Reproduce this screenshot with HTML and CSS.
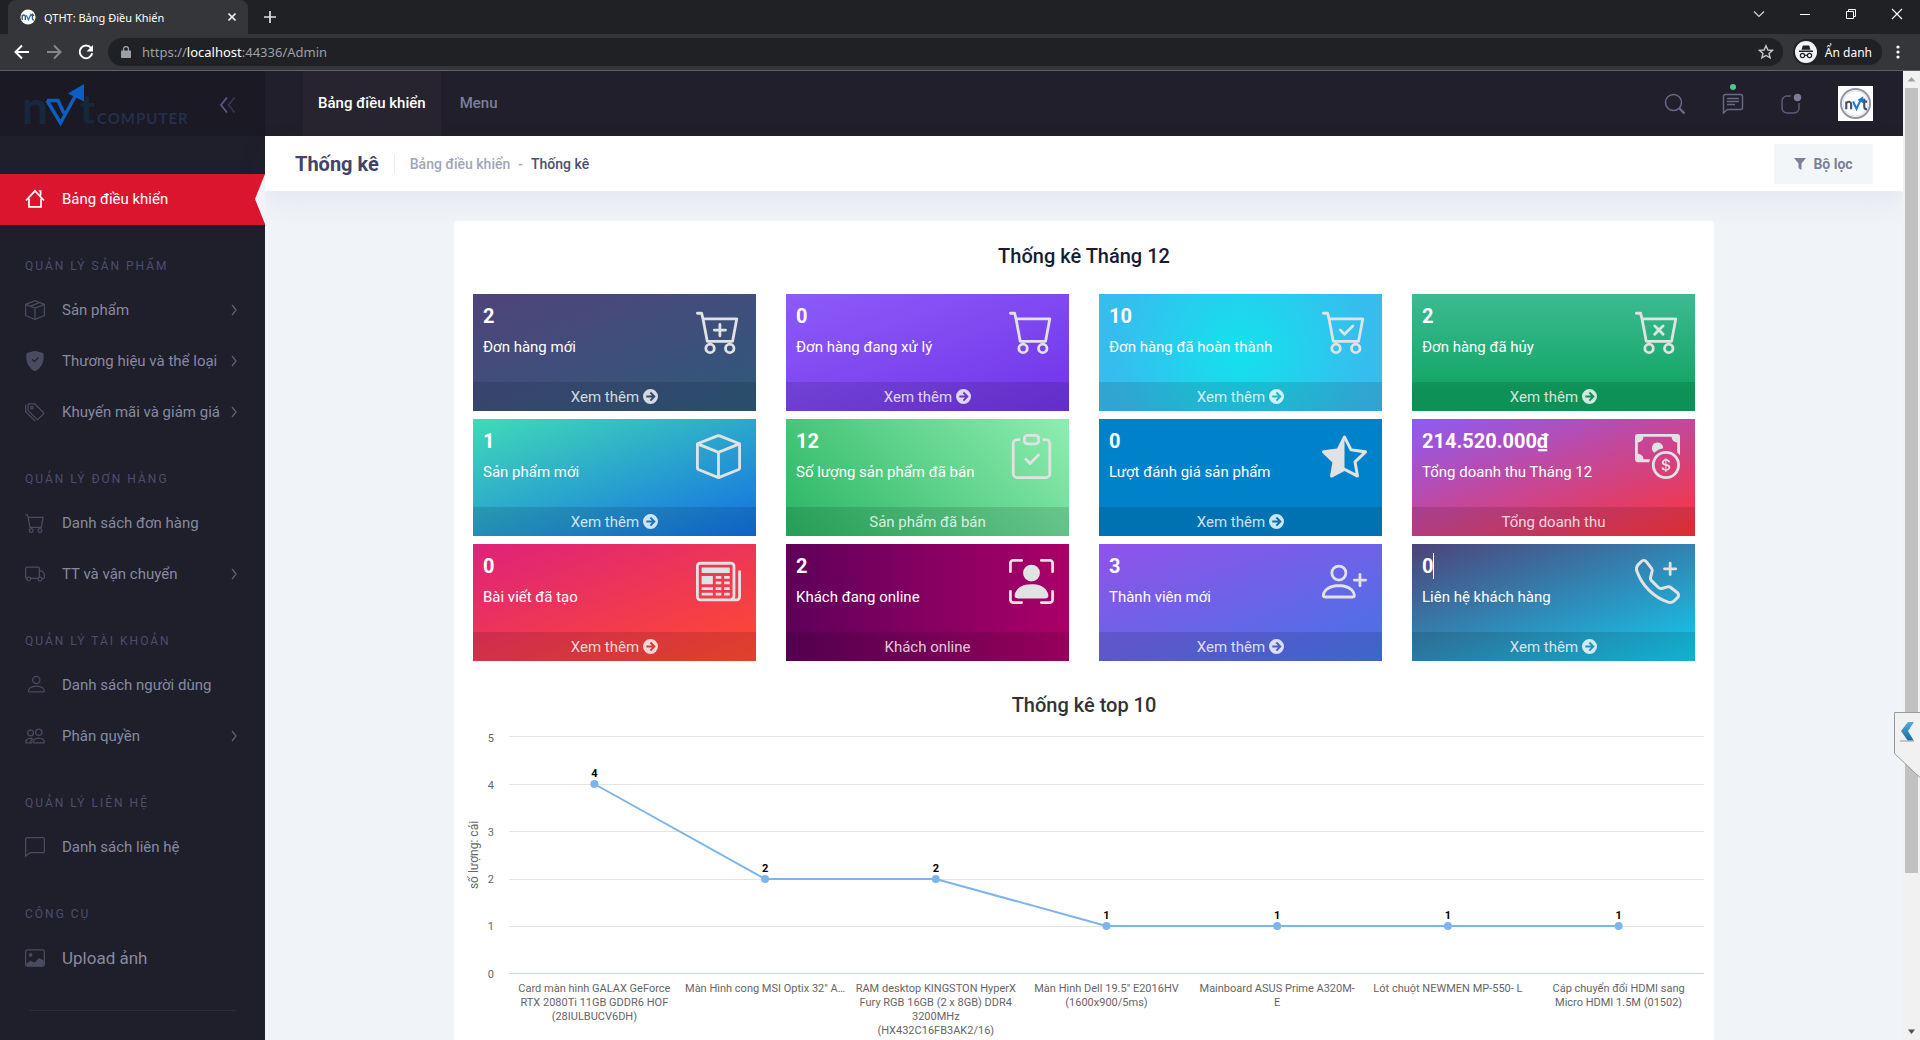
FILE: index.html
```html
<!DOCTYPE html>
<html lang="vi">
<head>
<meta charset="utf-8">
<meta name="viewport" content="width=device-width, initial-scale=1">
<title>QTHT: Bảng Điều Khiển</title>
<link rel="stylesheet" href="styles.css">
</head>
<body>
<svg class="sprite" aria-hidden="true">
  <symbol id="cart" viewBox="0 0 16 16"><path d="M0 1.5A.5.5 0 0 1 .5 1H2a.5.5 0 0 1 .485.379L2.89 3H14.5a.5.5 0 0 1 .491.592l-1.5 8A.5.5 0 0 1 13 12H4a.5.5 0 0 1-.491-.408L2.01 3.607 1.61 2H.5a.5.5 0 0 1-.5-.5zM3.102 4l1.313 7h8.17l1.313-7H3.102zM5 12a2 2 0 1 0 0 4 2 2 0 0 0 0-4zm7 0a2 2 0 1 0 0 4 2 2 0 0 0 0-4zm-7 1a1 1 0 1 1 0 2 1 1 0 0 1 0-2zm7 0a1 1 0 1 1 0 2 1 1 0 0 1 0-2z"/></symbol>
  <symbol id="cart-plus" viewBox="0 0 16 16"><use href="#cart"/><path d="M9 5.5a.5.5 0 0 0-1 0V7H6.5a.5.5 0 0 0 0 1H8v1.5a.5.5 0 0 0 1 0V8h1.5a.5.5 0 0 0 0-1H9V5.5z"/></symbol>
  <symbol id="cart-check" viewBox="0 0 16 16"><use href="#cart"/><path d="M11.354 6.354a.5.5 0 0 0-.708-.708L8 8.293 6.854 7.146a.5.5 0 1 0-.708.708l1.5 1.5a.5.5 0 0 0 .708 0l3-3z"/></symbol>
  <symbol id="cart-x" viewBox="0 0 16 16"><use href="#cart"/><path d="M7.354 5.646a.5.5 0 1 0-.708.708L7.793 7.5 6.646 8.646a.5.5 0 1 0 .708.708L8.5 8.207l1.146 1.147a.5.5 0 0 0 .708-.708L9.207 7.5l1.147-1.146a.5.5 0 0 0-.708-.708L8.5 6.793 7.354 5.646z"/></symbol>
  <symbol id="box" viewBox="0 0 16 16"><path d="M8.186 1.113a.5.5 0 0 0-.372 0L1.846 3.5 8 5.961 14.154 3.5 8.186 1.113zM15 4.239l-6.5 2.6v7.922l6.5-2.6V4.24zM7.5 14.762V6.838L1 4.239v7.923l6.5 2.6zM7.443.184a1.5 1.5 0 0 1 1.114 0l7.129 2.852A.5.5 0 0 1 16 3.5v8.662a1 1 0 0 1-.629.928l-7.185 2.874a.5.5 0 0 1-.372 0L.63 13.09a1 1 0 0 1-.63-.928V3.5a.5.5 0 0 1 .314-.464L7.443.184z"/></symbol>
  <symbol id="box-seam" viewBox="0 0 16 16"><path d="M8.186 1.113a.5.5 0 0 0-.372 0L1.846 3.5l2.404.961L10.404 2l-2.218-.887zm3.564 1.426L5.596 5 8 5.961 14.154 3.5l-2.404-.961zm3.25 1.7-6.5 2.6v7.922l6.5-2.6V4.24zM7.5 14.762V6.838L1 4.239v7.923l6.5 2.6zM7.443.184a1.5 1.5 0 0 1 1.114 0l7.129 2.852A.5.5 0 0 1 16 3.5v8.662a1 1 0 0 1-.629.928l-7.185 2.874a.5.5 0 0 1-.372 0L.63 13.09a1 1 0 0 1-.63-.928V3.5a.5.5 0 0 1 .314-.464L7.443.184z"/></symbol>
  <symbol id="clipboard" viewBox="0 0 16 16"><path d="M10.854 7.146a.5.5 0 0 1 0 .708l-3 3a.5.5 0 0 1-.708 0l-1.5-1.5a.5.5 0 1 1 .708-.708L7.5 9.793l2.646-2.647a.5.5 0 0 1 .708 0z"/><path d="M4 1.5H3a2 2 0 0 0-2 2V14a2 2 0 0 0 2 2h10a2 2 0 0 0 2-2V3.5a2 2 0 0 0-2-2h-1v1h1a1 1 0 0 1 1 1V14a1 1 0 0 1-1 1H3a1 1 0 0 1-1-1V3.5a1 1 0 0 1 1-1h1v-1z"/><path d="M9.5 1a.5.5 0 0 1 .5.5v1a.5.5 0 0 1-.5.5h-3a.5.5 0 0 1-.5-.5v-1a.5.5 0 0 1 .5-.5h3zm-3-1A1.5 1.5 0 0 0 5 1.5v1A1.5 1.5 0 0 0 6.5 4h3A1.5 1.5 0 0 0 11 2.5v-1A1.5 1.5 0 0 0 9.5 0h-3z"/></symbol>
  <symbol id="star-half" viewBox="0 0 16 16"><path d="M5.354 5.119 7.538.792A.516.516 0 0 1 8 .5c.183 0 .366.097.465.292l2.184 4.327 4.898.696A.537.537 0 0 1 16 6.32a.548.548 0 0 1-.17.445l-3.523 3.356.83 4.73c.078.443-.36.79-.746.592L8 13.187l-4.389 2.256a.52.52 0 0 1-.146.05c-.342.06-.668-.254-.6-.642l.83-4.73L.173 6.765a.55.55 0 0 1-.172-.403.58.58 0 0 1 .085-.302.513.513 0 0 1 .37-.245l4.898-.696zM8 12.027a.5.5 0 0 1 .232.056l3.686 1.894-.694-3.957a.565.565 0 0 1 .162-.505l2.907-2.77-4.052-.576a.525.525 0 0 1-.393-.288L8.001 2.223 8 2.226v9.8z"/></symbol>
  <symbol id="cash" viewBox="0 0 16 16"><path d="M11 15a4 4 0 1 0 0-8 4 4 0 0 0 0 8zm5-4a5 5 0 1 1-10 0 5 5 0 0 1 10 0z"/><path d="M9.438 11.944c.047.596.518 1.06 1.363 1.116v.44h.375v-.443c.875-.061 1.386-.529 1.386-1.207 0-.618-.39-.936-1.09-1.1l-.296-.07v-1.2c.376.043.614.248.671.532h.658c-.047-.575-.54-1.024-1.329-1.073V8.5h-.375v.45c-.747.073-1.255.522-1.255 1.158 0 .562.378.92 1.007 1.066l.248.061v1.272c-.384-.058-.639-.27-.696-.563h-.668zm1.36-1.354c-.369-.085-.569-.26-.569-.522 0-.294.216-.514.572-.578v1.1h-.003zm.432.746c.449.104.655.272.655.569 0 .339-.257.571-.709.614v-1.195l.054.012z"/><path d="M1 0a1 1 0 0 0-1 1v8a1 1 0 0 0 1 1h4.083c.058-.344.145-.678.258-1H3a2 2 0 0 0-2-2V3a2 2 0 0 0 2-2h10a2 2 0 0 0 2 2v3.528c.38.34.717.728 1 1.154V1a1 1 0 0 0-1-1H1z"/><path d="M9.998 5.083 10 5a2 2 0 1 0-3.132 1.65 5.982 5.982 0 0 1 3.13-1.567z"/></symbol>
  <symbol id="newspaper" viewBox="0 0 16 16"><path d="M0 2.5A1.5 1.5 0 0 1 1.5 1h11A1.5 1.5 0 0 1 14 2.5v10.528c0 .3-.05.654-.238.972h.738a.5.5 0 0 0 .5-.5v-9a.5.5 0 0 1 1 0v9a1.5 1.5 0 0 1-1.5 1.5H1.497A1.497 1.497 0 0 1 0 13.5v-11zM12 14c.37 0 .654-.211.853-.441.092-.106.147-.279.147-.531V2.5a.5.5 0 0 0-.5-.5h-11a.5.5 0 0 0-.5.5v11c0 .278.223.5.497.5H12z"/><path d="M2 3h10v2H2V3zm0 3h4v3H2V6zm0 4h4v1H2v-1zm0 2h4v1H2v-1zm5-6h2v1H7V6zm3 0h2v1h-2V6zM7 8h2v1H7V8zm3 0h2v1h-2V8zm-3 2h2v1H7v-1zm3 0h2v1h-2v-1zm-3 2h2v1H7v-1zm3 0h2v1h-2v-1z"/></symbol>
  <symbol id="person-box" viewBox="0 0 16 16"><path d="M1.5 1a.5.5 0 0 0-.5.5v3a.5.5 0 0 1-1 0v-3A1.5 1.5 0 0 1 1.5 0h3a.5.5 0 0 1 0 1h-3zM11 .5a.5.5 0 0 1 .5-.5h3A1.5 1.5 0 0 1 16 1.5v3a.5.5 0 0 1-1 0v-3a.5.5 0 0 0-.5-.5h-3a.5.5 0 0 1-.5-.5zM.5 11a.5.5 0 0 1 .5.5v3a.5.5 0 0 0 .5.5h3a.5.5 0 0 1 0 1h-3A1.5 1.5 0 0 1 0 14.5v-3a.5.5 0 0 1 .5-.5zm15 0a.5.5 0 0 1 .5.5v3a1.5 1.5 0 0 1-1.5 1.5h-3a.5.5 0 0 1 0-1h3a.5.5 0 0 0 .5-.5v-3a.5.5 0 0 1 .5-.5z"/><path d="M3 14s-1 0-1-1 1-4 6-4 6 3 6 4-1 1-1 1H3zm8-9a3 3 0 1 1-6 0 3 3 0 0 1 6 0z"/></symbol>
  <symbol id="person-plus" viewBox="0 0 16 16"><path d="M6 8a3 3 0 1 0 0-6 3 3 0 0 0 0 6zm2-3a2 2 0 1 1-4 0 2 2 0 0 1 4 0zm4 8c0 1-1 1-1 1H1s-1 0-1-1 1-4 6-4 6 3 6 4zm-1-.004c-.001-.246-.154-.986-.832-1.664C9.516 10.68 8.289 10 6 10c-2.29 0-3.516.68-4.168 1.332-.678.678-.83 1.418-.832 1.664h10z"/><path d="M13.5 5a.5.5 0 0 1 .5.5V7h1.5a.5.5 0 0 1 0 1H14v1.5a.5.5 0 0 1-1 0V8h-1.5a.5.5 0 0 1 0-1H13V5.5a.5.5 0 0 1 .5-.5z"/></symbol>
  <symbol id="phone-plus" viewBox="0 0 16 16"><path d="M3.654 1.328a.678.678 0 0 0-1.015-.063L1.605 2.3c-.483.484-.661 1.169-.45 1.77a17.568 17.568 0 0 0 4.168 6.608 17.569 17.569 0 0 0 6.608 4.168c.601.211 1.286.033 1.77-.45l1.034-1.034a.678.678 0 0 0-.063-1.015l-2.307-1.794a.678.678 0 0 0-.58-.122l-2.19.547a1.745 1.745 0 0 1-1.657-.459L5.482 8.062a1.745 1.745 0 0 1-.46-1.657l.548-2.19a.678.678 0 0 0-.122-.58L3.654 1.328zM1.884.511a1.745 1.745 0 0 1 2.612.163L6.29 2.98c.329.423.445.974.315 1.494l-.547 2.19a.678.678 0 0 0 .178.643l2.457 2.457a.678.678 0 0 0 .644.178l2.189-.547a1.745 1.745 0 0 1 1.494.315l2.306 1.794c.829.645.905 1.87.163 2.611l-1.034 1.034c-.74.74-1.846 1.065-2.877.702a18.634 18.634 0 0 1-7.01-4.42 18.634 18.634 0 0 1-4.42-7.009c-.362-1.03-.037-2.137.703-2.877L1.885.511z"/><path d="M12.5 1a.5.5 0 0 1 .5.5V3h1.5a.5.5 0 0 1 0 1H13v1.5a.5.5 0 0 1-1 0V4h-1.5a.5.5 0 0 1 0-1H12V1.5a.5.5 0 0 1 .5-.5z"/></symbol>
  <symbol id="shield" viewBox="0 0 16 16"><path fill-rule="evenodd" d="M8 0c-.69 0-1.843.265-2.928.56-1.11.3-2.229.655-2.887.87a1.54 1.54 0 0 0-1.044 1.262c-.596 4.477.787 7.795 2.465 9.99a11.777 11.777 0 0 0 2.517 2.453c.386.273.744.482 1.048.625.28.132.581.24.829.24s.548-.108.829-.24a7.159 7.159 0 0 0 1.048-.625 11.775 11.775 0 0 0 2.517-2.453c1.678-2.195 3.061-5.513 2.465-9.99a1.541 1.541 0 0 0-1.044-1.263 62.467 62.467 0 0 0-2.887-.87C9.843.266 8.69 0 8 0zm2.146 5.146a.5.5 0 0 1 .708.708l-3 3a.5.5 0 0 1-.708 0l-1.5-1.5a.5.5 0 1 1 .708-.708L7.5 7.793l2.646-2.647z"/></symbol>
  <symbol id="tags" viewBox="0 0 16 16"><path d="M3 2v4.586l7 7L14.586 9l-7-7H3zM2 2a1 1 0 0 1 1-1h4.586a1 1 0 0 1 .707.293l7 7a1 1 0 0 1 0 1.414l-4.586 4.586a1 1 0 0 1-1.414 0l-7-7A1 1 0 0 1 2 6.586V2z"/><path d="M5.5 5a.5.5 0 1 1 0-1 .5.5 0 0 1 0 1zm0 1a1.5 1.5 0 1 0 0-3 1.5 1.5 0 0 0 0 3z"/><path d="M1 7.086a1 1 0 0 0 .293.707L8.75 15.25l-.043.043a1 1 0 0 1-1.414 0l-7-7A1 1 0 0 1 0 7.586V3a1 1 0 0 1 1-1v5.086z"/></symbol>
  <symbol id="truck" viewBox="0 0 16 16"><path d="M0 3.5A1.5 1.5 0 0 1 1.5 2h9A1.5 1.5 0 0 1 12 3.5V5h1.02a1.5 1.5 0 0 1 1.17.563l1.481 1.85a1.5 1.5 0 0 1 .329.938V10.5a1.5 1.5 0 0 1-1.5 1.5H14a2 2 0 1 1-4 0H5a2 2 0 1 1-3.998-.085A1.5 1.5 0 0 1 0 10.5v-7zm1.294 7.456A1.999 1.999 0 0 1 4.732 11h5.536a2.01 2.01 0 0 1 .732-.732V3.5a.5.5 0 0 0-.5-.5h-9a.5.5 0 0 0-.5.5v7a.5.5 0 0 0 .294.456zM12 10a2 2 0 0 1 1.732 1h.768a.5.5 0 0 0 .5-.5V8.35a.5.5 0 0 0-.11-.312l-1.48-1.85A.5.5 0 0 0 13.02 6H12v4zm-9 1a1 1 0 1 0 0 2 1 1 0 0 0 0-2zm9 0a1 1 0 1 0 0 2 1 1 0 0 0 0-2z"/></symbol>
  <symbol id="person" viewBox="0 0 16 16"><g fill="none" stroke="currentColor"><circle cx="9" cy="4" r="2.9"/><path d="M3.5 13.5c-.6 0-.8-.3-.8-.8 0-1.2 1.5-3.9 6.4-3.9s6.4 2.700 6.4 3.900c0 .5-.3.800-.8.800z"/></g></symbol>
  <symbol id="people" viewBox="0 0 16 16"><g fill="none" stroke="currentColor"><circle cx="11" cy="5" r="2.500"/><path d="M7 13.500c-.5 0-.6-.3-.6-.7 0-1 1.200-3.200 4.600-3.200s4.500 2.200 4.500 3.200c0 .4-.2.700-.6.700z"/><circle cx="4.500" cy="5.500" r="2.300"/><path d="M5.500 13.500H1c-.4 0-.5-.3-.5-.7 0-1 1-3.200 5-3.200M4.500 13.500c0-1.500 1-3 2-3.500"/></g></symbol>
  <symbol id="chat" viewBox="0 0 16 16"><path fill="none" stroke="currentColor" d="M.5 15.200V1.500a1 1 0 0 1 1-1h13a1 1 0 0 1 1 1v10a1 1 0 0 1-1 1H4.400a1 1 0 0 0-.7.3z"/></symbol>
  <symbol id="image" viewBox="0 0 16 16"><rect x=".5" y="1.500" width="15" height="13" rx="1.500" fill="none" stroke="currentColor"/><circle cx="4.500" cy="5.500" r="1.500"/><path d="M1 12.500l3.500-2.500 3 1.700L11.300 8 15 10v3.500a1 1 0 0 1-1 1H2a1 1 0 0 1-1-1z"/></symbol>
  <symbol id="home" viewBox="0 0 20 20"><path fill="none" stroke="currentColor" stroke-width="1.700" d="M1 11.500 10 1.800l9 9.700M4 9.500v8.300h12V9.500M13.800 2h1.800v4.500"/></symbol>
  <symbol id="chevron" viewBox="0 0 8 12"><path fill="none" stroke="currentColor" stroke-width="1.300" d="M2 1l4 5-4 5"/></symbol>
  <symbol id="arrow-circle" viewBox="0 0 16 16"><path fill-rule="evenodd" d="M8 0a8 8 0 1 1 0 16A8 8 0 0 1 8 0zM7.200 4.400 9.600 7H3.500v2h6.100l-2.400 2.600L8.600 13l4.900-5-4.900-5z"/></symbol>
</svg>

<header class="browser">
  <div class="tabstrip">
    <div class="tab">
      <svg class="favicon" viewBox="0 0 36 36"><circle cx="18" cy="18" r="17" fill="#fff"/><path d="M5 25V13M5 16c3-4 7-3 7 2v7M28 10v12c0 3 2 3 4 3M25 14h7" fill="none" stroke="#40546b" stroke-width="3"/><path d="M14 14l5 10 6-13" fill="none" stroke="#1b78d8" stroke-width="3"/></svg>
      <span class="tab-title">QTHT: Bảng Điều Khiển</span>
      <button class="plain" aria-label="Đóng thẻ"><svg width="8" height="8" viewBox="0 0 8 8"><path d="M.5.5l7 7M7.500.5l-7 7" stroke="#e8eaed" stroke-width="1.600"/></svg></button>
    </div>
    <button class="plain new-tab" aria-label="Thẻ mới"><svg width="12" height="12" viewBox="0 0 12 12"><path d="M6 0v12M0 6h12" stroke="#e0e2e5" stroke-width="1.700"/></svg></button>
    <div class="window-buttons">
      <button class="plain" aria-label="Tìm thẻ"><svg width="12" height="12" viewBox="0 0 12 12"><path d="M1 3.500l5 5 5-5" fill="none" stroke="#d5d6d8" stroke-width="1.200"/></svg></button>
      <button class="plain" aria-label="Thu nhỏ"><svg width="12" height="12" viewBox="0 0 12 12"><path d="M1 6.500h10" stroke="#fff"/></svg></button>
      <button class="plain" aria-label="Khôi phục"><svg width="12" height="12" viewBox="0 0 12 12"><path d="M1.500 3.500h7v7h-7zM3.500 3.500v-2h7v7h-2" fill="none" stroke="#fff"/></svg></button>
      <button class="plain" aria-label="Đóng"><svg width="12" height="12" viewBox="0 0 12 12"><path d="M1 1l10 10M11 1L1 11" stroke="#fff" stroke-width="1.200"/></svg></button>
    </div>
  </div>
  <div class="toolbar">
    <button class="plain" aria-label="Quay lại"><svg width="16" height="16" viewBox="0 0 16 16"><path d="M15 8H2M8 1.500L1.500 8 8 14.500" fill="none" stroke="#fff" stroke-width="2"/></svg></button>
    <button class="plain" aria-label="Tiến"><svg width="16" height="16" viewBox="0 0 16 16"><path d="M1 8h13M8 1.500L14.500 8 8 14.500" fill="none" stroke="#85878a" stroke-width="2"/></svg></button>
    <button class="plain" aria-label="Tải lại"><svg width="16" height="16" viewBox="0 0 16 16"><path d="M13 4a6.300 6.300 0 1 0 1.200 5.200" fill="none" stroke="#fff" stroke-width="2"/><path d="M15 1v6.500H8.500z" fill="#fff"/></svg></button>
    <div class="address">
      <svg width="10" height="12" viewBox="0 0 10 12"><path fill="#9aa0a6" d="M1 4.500h8a1 1 0 0 1 1 1V11a1 1 0 0 1-1 1H1a1 1 0 0 1-1-1V5.500a1 1 0 0 1 1-1z"/><path d="M2.500 5V3a2.500 2.500 0 0 1 5 0v2" fill="none" stroke="#9aa0a6" stroke-width="1.300"/></svg>
      <span class="url">https://<b>localhost</b>:44336/Admin</span>
      <svg width="16" height="16" viewBox="0 0 16 16"><path d="M8 1.800l1.900 4.200 4.600.4-3.500 3 1.100 4.500L8 11.500l-4.100 2.400L5 9.400l-3.500-3 4.600-.4z" fill="none" stroke="#c6c9cd" stroke-width="1.400"/></svg>
    </div>
    <div class="incognito">
      <svg width="22" height="22" viewBox="0 0 22 22"><circle cx="11" cy="11" r="11" fill="#f1f3f4"/><path d="M4 9.500h14v1.500H4zM6.500 8.800l1.300-4.300h6.400l1.300 4.300z" fill="#202124"/><g fill="none" stroke="#202124" stroke-width="1.200"><circle cx="7.500" cy="14.500" r="2.100"/><circle cx="14.500" cy="14.500" r="2.100"/><path d="M9.600 14.300h2.800"/></g></svg>
      <span>Ẩn danh</span>
    </div>
    <button class="plain" aria-label="Trình đơn"><svg width="4" height="14" viewBox="0 0 4 14"><g fill="#fff"><circle cx="2" cy="2" r="1.600"/><circle cx="2" cy="7" r="1.600"/><circle cx="2" cy="12" r="1.600"/></g></svg></button>
  </div>
</header>

<div class="viewport">
  <aside class="sidebar">
    <div class="brand">
      <svg class="logo" width="168" height="44" viewBox="0 0 168 44" role="img" aria-label="nvt computer">
        <g font-family="Lato, sans-serif" font-weight="700"><text x="-3" y="41" font-size="46" fill="#17283d">n</text><text x="55" y="41" font-size="41" fill="#17283d">t</text><text x="72" y="41" font-size="15" letter-spacing="1" fill="#252e4e">COMPUTER</text></g>
        <path d="M22 17.500h11l6 13M22 17.500L35.500 40l17-31" fill="none" stroke="#0a5ec4" stroke-width="3.500"/><path d="M43 10.500L59 1v17.500z" fill="#0a5ec4"/>
      </svg>
      <button class="plain" aria-label="Thu gọn menu"><svg width="18" height="18" viewBox="0 0 18 18"><path d="M8 1.500L2 9l6 7.500" fill="none" stroke="#5b5786" stroke-width="1.800"/><path d="M15.500 1.500L9.500 9l6 7.500" fill="none" stroke="#37354f" stroke-width="1.800"/></svg></button>
    </div>
    <nav class="menu">
      <a class="item active" href="#"><svg class="icon"><use href="#home"/></svg><span>Bảng điều khiển</span></a>
      <h4>Quản lý sản phẩm</h4>
      <a class="item" href="#"><svg class="icon"><use href="#box-seam"/></svg><span>Sản phẩm</span><svg class="more"><use href="#chevron"/></svg></a>
      <a class="item" href="#"><svg class="icon"><use href="#shield"/></svg><span>Thương hiệu và thể loại</span><svg class="more"><use href="#chevron"/></svg></a>
      <a class="item" href="#"><svg class="icon"><use href="#tags"/></svg><span>Khuyến mãi và giảm giá</span><svg class="more"><use href="#chevron"/></svg></a>
      <h4>Quản lý đơn hàng</h4>
      <a class="item" href="#"><svg class="icon"><use href="#cart"/></svg><span>Danh sách đơn hàng</span></a>
      <a class="item" href="#"><svg class="icon"><use href="#truck"/></svg><span>TT và vận chuyển</span><svg class="more"><use href="#chevron"/></svg></a>
      <h4>Quản lý tài khoản</h4>
      <a class="item" href="#"><svg class="icon"><use href="#person"/></svg><span>Danh sách người dùng</span></a>
      <a class="item" href="#"><svg class="icon"><use href="#people"/></svg><span>Phân quyền</span><svg class="more"><use href="#chevron"/></svg></a>
      <h4>Quản lý liên hệ</h4>
      <a class="item" href="#"><svg class="icon"><use href="#chat"/></svg><span>Danh sách liên hệ</span></a>
      <h4>Công cụ</h4>
      <a class="item large" href="#"><svg class="icon"><use href="#image"/></svg><span>Upload ảnh</span></a>
      <hr>
    </nav>
  </aside>

  <main class="main">
    <div class="topbar">
      <nav class="topnav"><a class="current" href="#">Bảng điều khiển</a><a href="#">Menu</a></nav>
      <div class="tools">
        <button class="plain" aria-label="Tìm kiếm"><svg width="22" height="22" viewBox="0 0 22 22"><circle cx="9.500" cy="9.500" r="8" fill="none" stroke="#6a6888" stroke-width="1.500"/><path d="M15 15l5.500 5.500" stroke="#6a6888" stroke-width="2.400"/></svg></button>
        <button class="plain notify" aria-label="Tin nhắn"><svg width="22" height="22" viewBox="0 0 22 22"><path d="M1.500 20V3.500a2 2 0 0 1 2-2h15a2 2 0 0 1 2 2v11a2 2 0 0 1-2 2h-13zM5 5.500h12M5 8.500h12M5 11.500h8" fill="none" stroke="#6a6888" stroke-width="1.400"/></svg></button>
        <button class="plain" aria-label="Thông báo"><svg width="22" height="22" viewBox="0 0 22 22"><path d="M11 3H7a5 5 0 0 0-5 5v7a5 5 0 0 0 5 5h7a5 5 0 0 0 5-5v-5" fill="none" stroke="#5d5b7a" stroke-width="1.500"/><circle cx="17.500" cy="4.500" r="3.700" fill="#7d7b98"/></svg></button>
        <a class="avatar" href="#" aria-label="Tài khoản"><svg width="35" height="35" viewBox="0 0 36 36"><circle cx="18" cy="18" r="15" fill="#fff" stroke="#9295a3" stroke-width="2"/><circle cx="18" cy="18" r="13" fill="none" stroke="#dcdde4"/><path d="M8.500 24v-8M8.500 18c2-3 5-2 5 1v5M27 13v8c0 2 1 3 3 3M25 16h5" fill="none" stroke="#40546b" stroke-width="2.200"/><path fill="none" stroke="#1b78d8" stroke-width="2.200" d="M15.500 16l3.500 7.500L23 15"/><path fill="#1b78d8" d="M20 14.500l6-4v7z"/></svg></a>
      </div>
    </div>

    <div class="subheader">
      <h1>Thống kê</h1>
      <div class="crumbs"><a href="#">Bảng điều khiển</a><span>-</span><a class="here" href="#">Thống kê</a></div>
      <button class="filter"><svg width="12" height="12" viewBox="0 0 12 12"><path fill="#7b7f9b" d="M0 0h12L7.500 5.500V12l-3-2V5.500z"/></svg>Bộ lọc</button>
    </div>

    <section class="panel">
      <h2>Thống kê Tháng 12</h2>
      <div class="boxes">
        <article class="box c1"><strong>2</strong><p>Đơn hàng mới</p><svg class="art"><use href="#cart-plus"/></svg><a href="#">Xem thêm <svg><use href="#arrow-circle"/></svg></a></article>
        <article class="box c2"><strong>0</strong><p>Đơn hàng đang xử lý</p><svg class="art"><use href="#cart"/></svg><a href="#">Xem thêm <svg><use href="#arrow-circle"/></svg></a></article>
        <article class="box c3"><strong>10</strong><p>Đơn hàng đã hoàn thành</p><svg class="art"><use href="#cart-check"/></svg><a href="#">Xem thêm <svg><use href="#arrow-circle"/></svg></a></article>
        <article class="box c4"><strong>2</strong><p>Đơn hàng đã hủy</p><svg class="art"><use href="#cart-x"/></svg><a href="#">Xem thêm <svg><use href="#arrow-circle"/></svg></a></article>
        <article class="box c5"><strong>1</strong><p>Sản phẩm mới</p><svg class="art"><use href="#box"/></svg><a href="#">Xem thêm <svg><use href="#arrow-circle"/></svg></a></article>
        <article class="box c6"><strong>12</strong><p>Số lượng sản phẩm đã bán</p><svg class="art"><use href="#clipboard"/></svg><a href="#">Sản phẩm đã bán</a></article>
        <article class="box c7"><strong>0</strong><p>Lượt đánh giá sản phẩm</p><svg class="art"><use href="#star-half"/></svg><a href="#">Xem thêm <svg><use href="#arrow-circle"/></svg></a></article>
        <article class="box c8"><strong>214.520.000₫</strong><p>Tổng doanh thu Tháng 12</p><svg class="art"><use href="#cash"/></svg><a href="#">Tổng doanh thu</a></article>
        <article class="box c9"><strong>0</strong><p>Bài viết đã tạo</p><svg class="art"><use href="#newspaper"/></svg><a href="#">Xem thêm <svg><use href="#arrow-circle"/></svg></a></article>
        <article class="box c10"><strong>2</strong><p>Khách đang online</p><svg class="art"><use href="#person-box"/></svg><a href="#">Khách online</a></article>
        <article class="box c11"><strong>3</strong><p>Thành viên mới</p><svg class="art"><use href="#person-plus"/></svg><a href="#">Xem thêm <svg><use href="#arrow-circle"/></svg></a></article>
        <article class="box c12"><strong class="caret">0</strong><p>Liên hệ khách hàng</p><svg class="art"><use href="#phone-plus"/></svg><a href="#">Xem thêm <svg><use href="#arrow-circle"/></svg></a></article>
      </div>

      <div class="chart">
        <h3>Thống kê top 10</h3>
        <svg class="plot">
          <g class="grid"><line x2="100%" y1="0.5" y2="0.5"/><line x2="100%" y1="48.5" y2="48.5"/><line x2="100%" y1="95.5" y2="95.5"/><line x2="100%" y1="143.5" y2="143.5"/><line x2="100%" y1="190.5" y2="190.5"/><line class="base" x2="100%" y1="237.5" y2="237.5"/></g>
          <g class="ticks"><text x="-15" y="6">5</text><text x="-15" y="53">4</text><text x="-15" y="100">3</text><text x="-15" y="147">2</text><text x="-15" y="194">1</text><text x="-15" y="242">0</text></g>
          <text class="axis" transform="translate(-31 119) rotate(-90)">số lượng: cái</text>
          <g class="series"><line x1="7.143%" y1="48" x2="21.429%" y2="143"/><line x1="21.429%" y1="143" x2="35.714%" y2="143"/><line x1="35.714%" y1="143" x2="50%" y2="190"/><line x1="50%" y1="190" x2="92.857%" y2="190"/></g>
          <g class="dots"><circle cx="7.143%" cy="48" r="4"/><circle cx="21.429%" cy="143" r="4"/><circle cx="35.714%" cy="143" r="4"/><circle cx="50%" cy="190" r="4"/><circle cx="64.286%" cy="190" r="4"/><circle cx="78.571%" cy="190" r="4"/><circle cx="92.857%" cy="190" r="4"/></g>
          <g class="values"><text x="7.143%" y="41">4</text><text x="21.429%" y="136">2</text><text x="35.714%" y="136">2</text><text x="50%" y="183">1</text><text x="64.286%" y="183">1</text><text x="78.571%" y="183">1</text><text x="92.857%" y="183">1</text></g>
        </svg>
        <div class="categories">
          <span>Card màn hình GALAX GeForce<br>RTX 2080Ti 11GB GDDR6 HOF<br>(28IULBUCV6DH)</span>
          <span>Màn Hình cong MSI Optix 32" A…</span>
          <span>RAM desktop KINGSTON HyperX<br>Fury RGB 16GB (2 x 8GB) DDR4<br>3200MHz<br>(HX432C16FB3AK2/16)</span>
          <span>Màn Hình Dell 19.5" E2016HV<br>(1600x900/5ms)</span>
          <span>Mainboard ASUS Prime A320M-<br>E</span>
          <span>Lót chuột NEWMEN MP-550- L</span>
          <span>Cáp chuyển đổi HDMI sang<br>Micro HDMI 1.5M (01502)</span>
        </div>
      </div>
    </section>
  </main>

  <div class="scrollbar" aria-hidden="true">
    <svg width="17" height="17" viewBox="0 0 17 17"><path d="M4.500 10.500h8l-4-4.500z" fill="#a3a3a3"/></svg>
    <div class="track"><div class="thumb"></div></div>
    <svg width="17" height="17" viewBox="0 0 17 17"><path d="M5 6.500h7l-3.500 4.500z" fill="#505050"/></svg>
  </div>
  <button class="plain drawer" aria-label="Mở bảng bên"><svg width="26" height="67" viewBox="0 0 26 67"><defs><linearGradient id="blue" x2="0" y2="1"><stop stop-color="#4faee0"/><stop offset="1" stop-color="#176c9b"/></linearGradient></defs><path d="M27 .5H.5v41L27 66.500z" fill="#f1f1f1" stroke="#9b9b9b"/><path d="M14 10h6l-6 9 6 10h-6L7 19z" fill="url(#blue)"/><path d="M6 29h14" stroke="#b5b5b5" stroke-width="1.500"/></svg></button>
</div>
</body>
</html>
```
FILE: styles.css
```css
* { box-sizing: border-box; }
body {
  margin: 0;
  height: 100vh;
  display: flex;
  flex-direction: column;
  overflow: hidden;
  font-family: Roboto, "Liberation Sans", sans-serif;
  font-size: 15px;
  color: #181c32;
}
a { color: inherit; text-decoration: none; }
h1, h2, h3, h4, p { margin: 0; font-weight: 500; }
svg { display: block; flex: none; fill: currentColor; }
.sprite { position: absolute; width: 0; height: 0; }
.plain { padding: 0; border: 0; background: none; color: inherit; display: block; }

/* browser frame */
.browser { flex: none; background: #35363a; border-bottom: 1px solid #5f6063; font-family: "Noto Sans", sans-serif; font-size: 12px; color: #fff; }
.tabstrip { display: flex; align-items: center; height: 34px; padding: 0 17px 0 8px; background: #202124; }
.tab { display: flex; align-items: center; width: 240px; height: 34px; padding: 0 12px; background: #35363a; border-radius: 8px 8px 0 0; }
.favicon { width: 16px; height: 16px; margin-right: 8px; }
.tab-title { flex: 1; font-size: 11px; white-space: nowrap; }
.new-tab { margin-left: 16px; }
.window-buttons { display: flex; gap: 34px; margin: 0 0 6px auto; }
.toolbar { display: flex; align-items: center; height: 36px; padding: 0 20px 0 14px; gap: 16px; }
.address { flex: 1; display: flex; align-items: center; height: 28px; margin-left: -2px; padding: 0 9px 0 13px; gap: 11px; border-radius: 14px; background: #202124; font-size: 13px; color: #9aa0a6; }
.url { flex: 1; }
.url b { font-weight: 400; color: #fff; }
.incognito { display: flex; align-items: center; gap: 8px; height: 26px; margin: 0 -2px 0 -6px; padding: 0 10px 0 2px; border-radius: 13px; background: #202124; }

.viewport { position: relative; flex: 1; min-height: 0; display: flex; overflow: hidden; }

/* sidebar */
.sidebar { flex: none; width: 265px; background: #1f1e2b; overflow: hidden; }
.brand { display: flex; align-items: center; justify-content: space-between; height: 65px; padding: 2px 28px 0 25px; background: #1a1924; }
.logo { overflow: visible; }
.menu { padding-top: 38px; color: #868aa0; }
.item { position: relative; display: flex; align-items: center; height: 51px; padding: 0 27px 2px 25px; white-space: nowrap; }
.item span { flex: 1; margin-left: 17px; }
.icon { width: 20px; height: 20px; color: #4a4b60; }
.more { width: 8px; height: 12px; color: #5d5f76; }
.active { background: #dc152f; color: #fff; }
.active .icon { color: #fff; }
.active::after { content: ""; position: absolute; right: 0; top: 0; border: solid transparent; border-width: 25px 10px 25px 0; border-right-color: #f0f4f8; }
.large { font-size: 17px; }
.menu h4 { height: 60px; padding: 25px 25px 0; font-size: 12px; line-height: 33px; font-weight: 400; letter-spacing: 2px; text-transform: uppercase; color: #4c4e6f; }
.menu hr { margin: 26px 29px 0; border: 0; border-top: 1px solid #2c2b40; }

/* header */
.main { flex: 1; min-width: 0; background: #f0f4f8; }
.topbar { display: flex; justify-content: space-between; height: 65px; padding: 0 30px 0 38px; background: #211f2b; }
.topnav { display: flex; gap: 2px; font-weight: 500; line-height: 65px; color: #7c7f9b; }
.topnav a { padding: 0 15px; white-space: nowrap; }
.topnav .current { background: #27242f; color: #fff; }
.topnav a + a { padding-left: 17px; }
.tools { display: flex; align-items: center; gap: 36px; }
.notify { position: relative; }
.notify::before { content: ""; position: absolute; left: 8px; top: -9px; width: 6px; height: 6px; border-radius: 3px; background: #4ecb85; }
.avatar { background: #fff; }
.subheader { display: flex; align-items: center; height: 55px; padding: 0 30px; background: #fff; box-shadow: 0 10px 30px rgba(82, 63, 105, .08); white-space: nowrap; }
.subheader h1 { font-size: 20px; font-weight: 700; color: #3f4468; }
.crumbs { display: flex; gap: 8px; margin-left: 15px; padding-left: 15px; line-height: 20px; font-size: 14px; font-weight: 500; color: #a2a5b9; border-left: 1px solid #ebedf2; }
.crumbs .here { color: #4b4f70; }
.filter { display: flex; align-items: center; justify-content: center; gap: 7px; width: 99px; height: 40px; margin-left: auto; padding: 0; border: 0; background: #f3f6f9; font: 700 14px Roboto, sans-serif; color: #7b7f9b; }

/* statistics panel */
.panel { max-width: 1260px; height: 100%; margin: 30px auto 0; padding: 20px 0 0; background: #fff; position: relative; }
.panel h2, .chart h3 { font-size: 20px; line-height: 30px; text-align: center; }
.boxes { display: grid; grid-template-columns: repeat(4, 1fr); gap: 8px 30px; margin: 23px 19px 0; }
.box { position: relative; display: flex; flex-direction: column; min-height: 117px; color: #fff; }
.box strong { align-self: flex-start; margin: 9px 10px 8px; font-size: 20px; line-height: 26px; }
.box p { padding: 0 10px; line-height: 20px; font-weight: 400; }
.box a { display: flex; align-items: center; justify-content: center; gap: 4px; height: 29px; margin-top: auto; background: rgba(0, 0, 0, .12); color: rgba(255, 255, 255, .8); }
.box a svg { width: 15px; height: 15px; }
.art { position: absolute; top: 15px; right: 15px; width: 45px; height: 45px; color: #e1e2e4; }
.box .caret { border-right: 1px solid #fff; }
.c1 { background: linear-gradient(160deg, #50437a, #2e5a7b); }
.c2 { background: linear-gradient(160deg, #8d5bf8, #7034e8); }
.c3 { background: radial-gradient(circle at 50% 50%, #13e2ed, #37bcee 85%); }
.c4 { background: linear-gradient(#3dba93, #10a562 85%); }
.c5 { background: linear-gradient(160deg, #41dab7, #136fe3); }
.c6 { background: linear-gradient(45deg, #2ab462, #8eeeb1); }
.c7 { background: #0082cb; }
.c8 { background: linear-gradient(160deg, #8b5cf6, #c2489d 45%, #fc3338); }
.c9 { background: linear-gradient(160deg, #de227b, #ff4b2e); }
.c10 { background: linear-gradient(90deg, #5e005a, #ab0068); }
.c11 { background: linear-gradient(160deg, #9152ea, #4574e6); }
.c12 { background: linear-gradient(160deg, #4e4379, #13ccf0); }

/* chart */
.chart { margin-top: 29px; padding: 0 10px 0 55px; }
.chart h3 { margin-left: -45px; color: #333; }
.plot { width: 100%; height: 240px; margin-top: 16px; overflow: visible; }
.grid line { stroke: #e3e3e6; }
.grid .base { stroke: #ccd6eb; }
.ticks text { font-size: 11px; text-anchor: end; fill: #666; }
.axis { font-size: 12px; text-anchor: middle; fill: #666; }
.series line { stroke: #7cb5ec; stroke-width: 2; }
.dots circle { fill: #7cb5ec; }
.values text { font-size: 11px; font-weight: 700; text-anchor: middle; fill: #000; }
.categories { display: grid; grid-template-columns: repeat(7, 1fr); margin-top: 6px; font-size: 11px; line-height: 14px; text-align: center; white-space: nowrap; color: #666; }

/* window edge */
.scrollbar { flex: none; display: flex; flex-direction: column; width: 17px; background: #f1f1f1; }
.track { flex: 1; padding: 0 2px; }
.thumb { height: 84%; background: #c1c1c1; }
.drawer { position: absolute; right: 0; top: 641px; }
```
